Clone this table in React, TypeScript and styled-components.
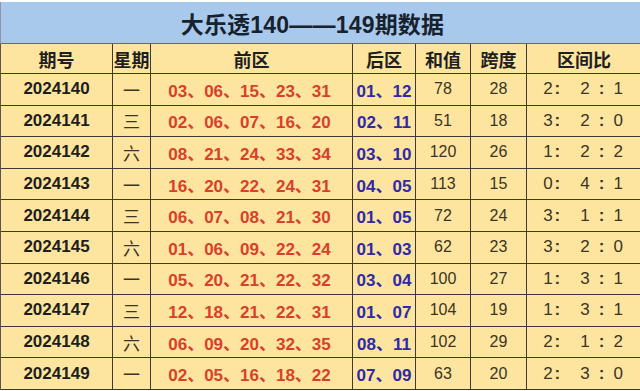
import React from "react";
import styled, { createGlobalStyle } from "styled-components";

const GlobalStyle = createGlobalStyle`
  html, body {
    margin: 0;
    padding: 0;
    background: #ffffff;
  }
  * {
    box-sizing: border-box;
  }
`;

const Page = styled.div`
  width: 640px;
  height: 391px;
  overflow: hidden;
  padding-top: 2px;
  background: #ffffff;
  font-family: "Liberation Sans", "Noto Sans CJK SC", sans-serif;
`;

const Title = styled.div`
  height: 42px;
  display: flex;
  align-items: center;
  justify-content: center;
  background: #a9c9ec;
  border-left: 1px solid #8a96a4;
  border-bottom: 1px solid #6d6a5c;
  color: #16222e;
  font-size: 23px;
  font-weight: 700;
  letter-spacing: 0.2px;
  padding-right: 16px;
`;

const Grid = styled.div`
  display: grid;
  grid-template-columns: 112px 38px 202px 63px 55px 56px 114px;
  grid-template-rows: 30px;
  grid-auto-rows: 31.6px;
  background: #fde5a0;
  border-left: 1px solid #555;
`;

const Cell = styled.div<{ $last?: boolean }>`
  display: flex;
  align-items: center;
  justify-content: center;
  border-right: ${(p) => (p.$last ? "none" : "1px solid #3b3a33")};
  border-bottom: 1px solid #3b3a33;
  white-space: nowrap;
  overflow: hidden;
`;

const HeadCell = styled(Cell)`
  font-size: 18px;
  font-weight: 700;
  color: #1f1f1f;
`;

const IssueCell = styled(Cell)`
  font-size: 17px;
  font-weight: 700;
  color: #1e1e1a;
`;

const WeekCell = styled(Cell)`
  font-size: 17px;
  color: #3a3424;
`;

const FrontCell = styled(Cell)`
  font-size: 17px;
  font-weight: 700;
  color: #d8402a;
  padding-right: 4px;
`;

const BackCell = styled(Cell)`
  font-size: 17px;
  font-weight: 700;
  color: #2e2aa8;
`;

const PlainCell = styled(Cell)`
  font-size: 16px;
  color: #3b3422;
`;

const Ratio = styled.span`
  display: inline-flex;
  align-items: center;
  font-size: 17px;
  margin-right: 2px;
`;

const RatioColon = styled.span<{ $gap: number }>`
  font-weight: 700;
  margin-left: ${(p) => p.$gap}px;
`;

const RatioPart = styled.span<{ $gap: number }>`
  margin-left: ${(p) => p.$gap}px;
`;

type Row = {
  issue: string;
  week: string;
  front: string[];
  back: string[];
  sum: number;
  span: number;
  ratio: [number, number, number];
};

const rows: Row[] = [
  { issue: "2024140", week: "一", front: ["03", "06", "15", "23", "31"], back: ["01", "12"], sum: 78, span: 28, ratio: [2, 2, 1] },
  { issue: "2024141", week: "三", front: ["02", "06", "07", "16", "20"], back: ["02", "11"], sum: 51, span: 18, ratio: [3, 2, 0] },
  { issue: "2024142", week: "六", front: ["08", "21", "24", "33", "34"], back: ["03", "10"], sum: 120, span: 26, ratio: [1, 2, 2] },
  { issue: "2024143", week: "一", front: ["16", "20", "22", "24", "31"], back: ["04", "05"], sum: 113, span: 15, ratio: [0, 4, 1] },
  { issue: "2024144", week: "三", front: ["06", "07", "08", "21", "30"], back: ["01", "05"], sum: 72, span: 24, ratio: [3, 1, 1] },
  { issue: "2024145", week: "六", front: ["01", "06", "09", "22", "24"], back: ["01", "03"], sum: 62, span: 23, ratio: [3, 2, 0] },
  { issue: "2024146", week: "一", front: ["05", "20", "21", "22", "32"], back: ["03", "04"], sum: 100, span: 27, ratio: [1, 3, 1] },
  { issue: "2024147", week: "三", front: ["12", "18", "21", "22", "31"], back: ["01", "07"], sum: 104, span: 19, ratio: [1, 3, 1] },
  { issue: "2024148", week: "六", front: ["06", "09", "20", "32", "35"], back: ["08", "11"], sum: 102, span: 29, ratio: [2, 1, 2] },
  { issue: "2024149", week: "一", front: ["02", "05", "16", "18", "22"], back: ["07", "09"], sum: 63, span: 20, ratio: [2, 3, 0] },
];

const headers = ["期号", "星期", "前区", "后区", "和值", "跨度", "区间比"];

export default function App() {
  return (
    <>
      <GlobalStyle />
      <Page>
        <Title>大乐透140——149期数据</Title>
        <Grid>
          {headers.map((h, i) => (
            <HeadCell key={h} $last={i === headers.length - 1}>
              {h}
            </HeadCell>
          ))}
          {rows.map((r) => (
            <React.Fragment key={r.issue}>
              <IssueCell>{r.issue}</IssueCell>
              <WeekCell>{r.week}</WeekCell>
              <FrontCell>{r.front.join("、")}</FrontCell>
              <BackCell>{r.back.join("、")}</BackCell>
              <PlainCell>{r.sum}</PlainCell>
              <PlainCell>{r.span}</PlainCell>
              <PlainCell $last>
                <Ratio>
                  <span>{r.ratio[0]}</span>
                  <RatioColon $gap={2}>:</RatioColon>
                  <RatioPart $gap={20}>{r.ratio[1]}</RatioPart>
                  <RatioColon $gap={9}>:</RatioColon>
                  <RatioPart $gap={9}>{r.ratio[2]}</RatioPart>
                </Ratio>
              </PlainCell>
            </React.Fragment>
          ))}
        </Grid>
      </Page>
    </>
  );
}
